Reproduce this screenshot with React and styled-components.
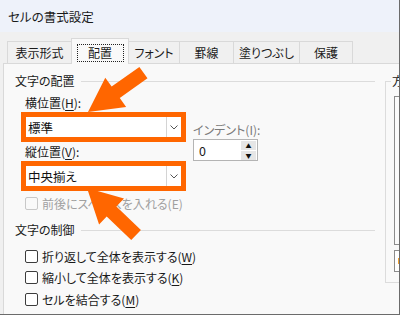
import React from 'react';
import styled, {createGlobalStyle} from 'styled-components';

const GlobalStyle = createGlobalStyle`
  body {
    margin: 0;
    font-family: "Noto Sans CJK JP", "Noto Sans", sans-serif;
    font-feature-settings: "palt";
  }
`;

const ORANGE = '#ff6600';

const Arrow = ({tipX, tipY, angle}) => {
    // local arrow points right, tip at x = 68
    const pts = '0,-7 34,-7 34,-18 68,0 34,18 34,7 0,7';
    return (
        <polygon points={pts} fill={ORANGE}
                 transform={`translate(${tipX} ${tipY}) rotate(${angle}) translate(-68 0)`}/>
    );
};

const Chevron = () => (
    <svg width="8" height="5" viewBox="0 0 8 5">
        <polyline points="0.5,0.5 4,4 7.5,0.5" fill="none" stroke="#555" strokeWidth="1"/>
    </svg>
);

const Combo = ({value}) => (
    <Frame>
        <ComboBox>
            <span className="value">{value}</span>
            <span className="btn"><Chevron/></span>
        </ComboBox>
    </Frame>
);

const Check = ({disabled, children}) => (
    <CheckRow disabled={disabled}>
        <Box disabled={disabled}/>
        <span>{children}</span>
    </CheckRow>
);

const tabs = [
    {label: '表示形式', w: 65},
    {label: '配置', w: 58, active: true},
    {label: 'フォント', w: 52},
    {label: '罫線', w: 55},
    {label: '塗りつぶし', w: 67},
    {label: '保護', w: 54},
];

const App = () => {
    return (
        <Window>
            <GlobalStyle/>
            <TitleBar>セルの書式設定</TitleBar>
            <TabRow>
                {tabs.map(t => (
                    <Tab key={t.label} $w={t.w} $active={t.active}>
                        {t.active ? <Focus>{t.label}</Focus> : t.label}
                    </Tab>
                ))}
            </TabRow>
            <Panel>
                <LeftCol>
                    <GroupHeader>文字の配置</GroupHeader>
                    <AlignGrid>
                        <div>
                            <Label>横位置(<u>H</u>):</Label>
                            <Combo value="標準"/>
                            <Label $top={2}>縦位置(<u>V</u>):</Label>
                            <Combo value="中央揃え"/>
                        </div>
                        <IndentCol>
                            <Label $muted $inset={0}>インデント(I):</Label>
                            <Spin>
                                <span className="value">0</span>
                                <span className="btns">
                                    <SpinBtn>▲</SpinBtn>
                                    <SpinBtn>▼</SpinBtn>
                                </span>
                            </Spin>
                        </IndentCol>
                    </AlignGrid>
                    <CheckList $top={4}>
                        <Check disabled>前後にスペースを入れる(E)</Check>
                    </CheckList>
                    <GroupHeader $top={11}>文字の制御</GroupHeader>
                    <CheckList $top={10}>
                        <Check>折り返して全体を表示する(<u>W</u>)</Check>
                        <Check>縮小して全体を表示する(<u>K</u>)</Check>
                        <Check>セルを結合する(<u>M</u>)</Check>
                    </CheckList>
                </LeftCol>
                <Orientation>
                    <legend>方向</legend>
                    <div className="dial"/>
                    <div className="deg"><i/></div>
                </Orientation>
            </Panel>
            <Overlay width="400" height="315" viewBox="0 0 400 315">
                <Arrow tipX={88} tipY={112} angle={144.6}/>
                <Arrow tipX={87} tipY={188} angle={-136.2}/>
            </Overlay>
        </Window>
    );
};

const Window = styled.div`
  position: relative;
  width: 400px;
  height: 315px;
  box-sizing: border-box;
  border-right: 1px solid #6b6b6b;
  border-bottom: 1px solid #6b6b6b;
  background: #f0f0f0;
  overflow: hidden;
  display: flex;
  flex-direction: column;
  color: #1a1a1a;
  font-size: 12px;
`;

const TitleBar = styled.div`
  height: 32px;
  flex: none;
  display: flex;
  align-items: center;
  padding-left: 8px;
  background: #eef2fa;
  font-size: 12.5px;
  color: #1a1a1a;
`;

const TabRow = styled.div`
  flex: none;
  height: 25px;
  margin-top: 6px;
  padding-left: 7px;
  display: flex;
  align-items: flex-end;
  position: relative;
  z-index: 1;
`;

const Tab = styled.div`
  box-sizing: border-box;
  width: ${p => p.$w}px;
  height: ${p => p.$active ? 26 : 22}px;
  margin-bottom: ${p => p.$active ? -1 : 0}px;
  margin-left: -1px;
  border: 1px solid #d9d9d9;
  border-bottom: none;
  background: ${p => p.$active ? '#f9f9f9' : '#f0f0f0'};
  display: flex;
  align-items: center;
  justify-content: center;
  padding-top: ${p => p.$active ? 2 : 0}px;
  &:first-child { margin-left: 0; }
`;

const Focus = styled.span`
  display: flex;
  align-items: center;
  justify-content: center;
  width: 47px;
  height: 18px;
  box-sizing: border-box;
  border: 1px dotted #222;
`;

const Panel = styled.div`
  flex: 1;
  margin-left: 3px;
  border-left: 1px solid #d9d9d9;
  border-top: 1px solid #d9d9d9;
  background: #f9f9f9;
  display: flex;
  gap: 10px;
`;

const LeftCol = styled.div`
  width: 371px;
  flex: none;
  padding-left: 11px;
  box-sizing: border-box;
`;

const GroupHeader = styled.div`
  margin-top: ${p => p.$top ?? 9}px;
  height: 16px;
  display: flex;
  align-items: center;
  gap: 6px;
  line-height: 16px;

  &::after {
    content: "";
    flex: 1;
    height: 1px;
    background: #dcdcdc;
  }
`;

const AlignGrid = styled.div`
  display: grid;
  grid-template-columns: 165px auto;
  column-gap: 7px;
  margin-top: 6px;
  padding-left: 6px;
`;

const Label = styled.div`
  height: 16px;
  line-height: 16px;
  margin-top: ${p => p.$top ?? 0}px;
  margin-bottom: 1px;
  padding-left: ${p => p.$inset ?? 4}px;
  color: ${p => p.$muted ? '#7a7a7a' : '#1a1a1a'};
  & u { text-underline-offset: 2px; }
`;

const Frame = styled.div`
  width: 165px;
  height: 30px;
  box-sizing: border-box;
  border: 5px solid ${ORANGE};
`;

const ComboBox = styled.div`
  height: 100%;
  background: #fff;
  display: flex;
  align-items: center;

  & .value {
    flex: 1;
    padding-left: 2px;
    font-size: 12.5px;
    color: #111;
  }

  & .btn {
    width: 14px;
    height: 100%;
    border-left: 1px solid #d4d4d4;
    display: flex;
    align-items: center;
    justify-content: center;
  }
`;

const IndentCol = styled.div`
  padding-top: 27px;
`;

const Spin = styled.div`
  margin-top: 1px;
  width: 65px;
  height: 22px;
  box-sizing: border-box;
  border: 1px solid #b4b4b4;
  background: #fff;
  display: flex;
  align-items: center;

  & .value {
    flex: 1;
    padding-left: 5px;
    font-size: 12.5px;
  }

  & .btns {
    width: 15px;
    margin-right: 1px;
    display: flex;
    flex-direction: column;
    gap: 1px;
  }
`;

const SpinBtn = styled.span`
  height: 9px;
  background: #e6e6e6;
  font-size: 6px;
  line-height: 9px;
  text-align: center;
  color: #111;
`;

const CheckList = styled.div`
  margin-top: ${p => p.$top}px;
  padding-left: 10px;
  display: flex;
  flex-direction: column;
  gap: 5.5px;
`;

const CheckRow = styled.div`
  height: 16px;
  display: flex;
  align-items: center;
  gap: 4px;
  color: ${p => p.disabled ? '#a0a0a0' : '#1a1a1a'};
  & u { text-underline-offset: 2px; }
`;

const Box = styled.span`
  width: 13px;
  height: 13px;
  box-sizing: border-box;
  border: 1px solid ${p => p.disabled ? '#c8c8c8' : '#3c3c3c'};
  border-radius: 2px;
  background: ${p => p.disabled ? '#f9f9f9' : '#fff'};
`;

const Orientation = styled.fieldset`
  flex: none;
  width: 100px;
  height: 210px;
  margin: 9px 0 0;
  padding: 0 0 0 8px;
  box-sizing: border-box;
  border: 1px solid #dcdcdc;

  & legend {
    padding: 0 1px;
    margin-left: -3px;
    line-height: 16px;
  }

  & .dial {
    margin-top: 7px;
    height: 149px;
    box-sizing: border-box;
    border: 1px solid #8c8c8c;
    background: #fbfbfb;
  }

  & .deg {
    margin-top: 5px;
    height: 22px;
    box-sizing: border-box;
    border: 1px solid #8c8c8c;
    background: #fff;
    display: flex;
    align-items: center;
  }

  & .deg i {
    width: 3px;
    height: 6px;
    margin-left: 3px;
    background: #f0a030;
  }
`;

const Overlay = styled.svg`
  position: absolute;
  left: 0;
  top: 0;
  pointer-events: none;
`;

export default App;
